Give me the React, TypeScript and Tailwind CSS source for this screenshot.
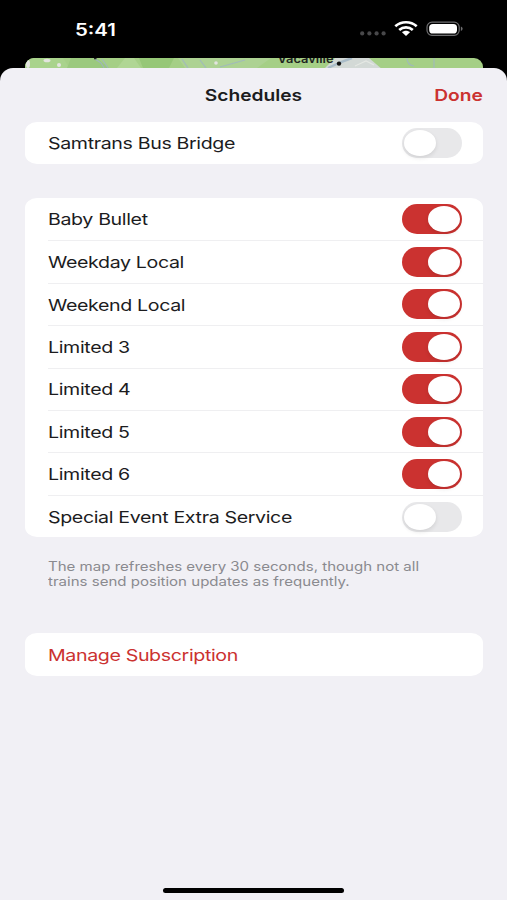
import React, { useState } from 'react';

interface Schedule {
  name: string;
  enabled: boolean;
}

interface ToggleProps {
  label: string;
  checked: boolean;
  onChange: () => void;
}

const SCHEDULES: Schedule[] = [
  { name: 'Baby Bullet', enabled: true },
  { name: 'Weekday Local', enabled: true },
  { name: 'Weekend Local', enabled: true },
  { name: 'Limited 3', enabled: true },
  { name: 'Limited 4', enabled: true },
  { name: 'Limited 5', enabled: true },
  { name: 'Limited 6', enabled: true },
  { name: 'Special Event Extra Service', enabled: false }
];

// Switch
const Toggle: React.FC<ToggleProps> = ({ label, checked, onChange }) => (
  <button
    role="switch"
    aria-checked={checked}
    aria-label={label}
    onClick={onChange}
    className={`flex h-[30px] w-[60px] shrink-0 items-center rounded-full px-[2px] ${
      checked ? 'justify-end bg-[#cb3230]' : 'justify-start bg-[#e8e8ea]'
    }`}
  >
    <span className="h-[26px] w-[32px] rounded-[50%] bg-white shadow-[0_2px_4px_rgba(0,0,0,0.1)]" />
  </button>
);

// Row with a label and a switch
const ToggleRow: React.FC<ToggleProps & { divided?: boolean }> = ({ divided = false, ...toggle }) => (
  <div className="flex h-[42.45px] pl-[23.8px]">
    <div
      className={`flex flex-1 items-center justify-between pr-[21px] ${
        divided ? 'border-t border-[#efeff1]' : ''
      }`}
    >
      <span className="mt-px origin-left scale-x-[1.195] whitespace-nowrap text-[16.4px] tracking-[-0.3px] text-[#1c1c1e]">
        {toggle.label}
      </span>
      <Toggle {...toggle} />
    </div>
  </div>
);

const StatusBar = () => (
  <div className="flex h-[57.5px] items-start justify-between pt-[19px] pr-[43px] pl-[75px] text-white">
    <span className="mt-[0.5px] origin-left scale-x-[1.2] text-[17px] leading-[21px] font-semibold">5:41</span>
    <div className="flex items-start">
      <svg width="28" height="20" viewBox="0 0 28 20" fill="#48484a">
        <circle cx="3.2" cy="14.4" r="2.1" />
        <circle cx="10.4" cy="14.4" r="2.1" />
        <circle cx="17.6" cy="14.4" r="2.1" />
        <circle cx="24.6" cy="14.4" r="2.1" />
      </svg>
      <svg className="ml-[7px]" width="24" height="20" viewBox="0 0 24 20" fill="none" stroke="#fff" strokeWidth="2.7">
        <path d="M1.3 7.3C7.4 1.9 16.6 1.9 22.7 7.3" />
        <path d="M5.2 10.9C9.1 7.5 14.9 7.5 18.8 10.9" />
        <path d="M8 13.3C10.2 11.3 13.8 11.3 16 13.3L12 16.9Z" fill="#fff" stroke="none" />
      </svg>
      <svg className="ml-[8px]" width="38" height="20" viewBox="0 0 38 20">
        <rect x="1" y="3.1" width="32.2" height="13.2" rx="5" fill="none" stroke="#6e6e70" strokeWidth="1.2" />
        <rect x="3.2" y="4.9" width="27.8" height="9.6" rx="3.6" fill="#fff" />
        <path d="M34.9 7.6C37.2 8.4 37.2 11.2 34.9 12Z" fill="#6e6e70" />
      </svg>
    </div>
  </div>
);

// Sliver of the map left visible behind the sheet
const MapStrip = () => (
  <svg className="mx-[25px] block h-[22px] w-[458px] rounded-t-[9px]" viewBox="0 0 458 22">
    <rect width="458" height="22" fill="#a5cf86" />
    <path d="M0 0H38L52 22H0Z" fill="#a9d38c" />
    <path d="M46 0H72L84 10H42Z" fill="#9bc97e" />
    <path d="M100 0H109L116 10H92Z" fill="#b0d694" />
    <path d="M114 0H149L144 10H118Z" fill="#96c777" />
    <path d="M153 0H246L232 10H160Z" fill="#add293" />
    <path d="M310 0H344L358 12H298Z" fill="#d3d9d6" />
    <g fill="#e3e4df">
      <ellipse cx="22" cy="2.5" rx="3.5" ry="1.8" />
      <circle cx="34" cy="7" r="2" />
      <circle cx="191" cy="5" r="1.8" />
      <ellipse cx="3" cy="6" rx="2" ry="4" />
    </g>
    <g fill="none" stroke="#9fb4c4" strokeWidth="1.2" strokeOpacity="0.8">
      <path d="M70 1L76 5L79 10M77 1L83 10M157 1L163 10M175 2L181 10M195 9L220 2M382 0Q382 7 389 8M409 0V10" />
      <path d="M303 10L316 4L327 0" strokeWidth="2.4" />
      <path d="M330 8L341 3L349 7" stroke="#e9ebe6" />
    </g>
    <path d="M69 0H71.5V1.2H69Z" fill="#222" />
    <text
      x="252.5"
      y="5.4"
      textLength="56"
      lengthAdjust="spacingAndGlyphs"
      fontSize="11.5"
      fontWeight="600"
      fill="#20241f"
    >
      Vacaville
    </text>
    <circle cx="314" cy="5.6" r="2.2" fill="#111" />
  </svg>
);

const App: React.FC = () => {
  const [busBridge, setBusBridge] = useState(false);
  const [schedules, setSchedules] = useState<Schedule[]>(SCHEDULES);

  const toggleSchedule = (name: string) => {
    setSchedules(prev => prev.map(s => (s.name === name ? { ...s, enabled: !s.enabled } : s)));
  };

  return (
    <div className="flex h-[900px] w-[507px] flex-col overflow-hidden bg-black font-['Inter',sans-serif]">
      <StatusBar />
      <MapStrip />

      {/* Sheet */}
      <div className="relative -mt-[12px] flex flex-1 flex-col rounded-t-[13px] bg-[#f1f0f5] pr-[24px] pl-[24.5px]">
        <div className="grid h-[54.5px] grid-cols-3 items-center pt-[1.5px] text-[16.4px] font-semibold">
          <span />
          <h1 className="scale-x-[1.17] text-center text-[#1c1c1e]">Schedules</h1>
          <button className="origin-right scale-x-[1.17] text-right text-[#cb3230]">Done</button>
        </div>

        <div className="rounded-[12px/10px] bg-white">
          <ToggleRow label="Samtrans Bus Bridge" checked={busBridge} onChange={() => setBusBridge(!busBridge)} />
        </div>

        <div className="mt-[33.4px] rounded-[12px/10px] bg-white">
          {schedules.map((schedule, index) => (
            <ToggleRow
              key={schedule.name}
              label={schedule.name}
              checked={schedule.enabled}
              divided={index > 0}
              onChange={() => toggleSchedule(schedule.name)}
            />
          ))}
        </div>

        <p className="mt-[21.5px] ml-[23.8px] origin-left scale-x-[1.203] text-[12.5px] leading-[15.5px] whitespace-nowrap text-[#8a8a8f]">
          The map refreshes every 30 seconds, though not all
          <br />
          trains send position updates as frequently.
        </p>

        <button className="mt-[43.5px] flex h-[43px] items-center rounded-[12px/10px] bg-white pl-[23.8px] text-[16.4px] tracking-[-0.3px] text-[#cb3230]">
          <span className="mt-px origin-left scale-x-[1.195]">Manage Subscription</span>
        </button>

        {/* Home indicator */}
        <div className="mt-auto mb-[7.5px] h-[5px] w-[181px] self-center rounded-full bg-black" />
      </div>
    </div>
  );
};

export default App;
